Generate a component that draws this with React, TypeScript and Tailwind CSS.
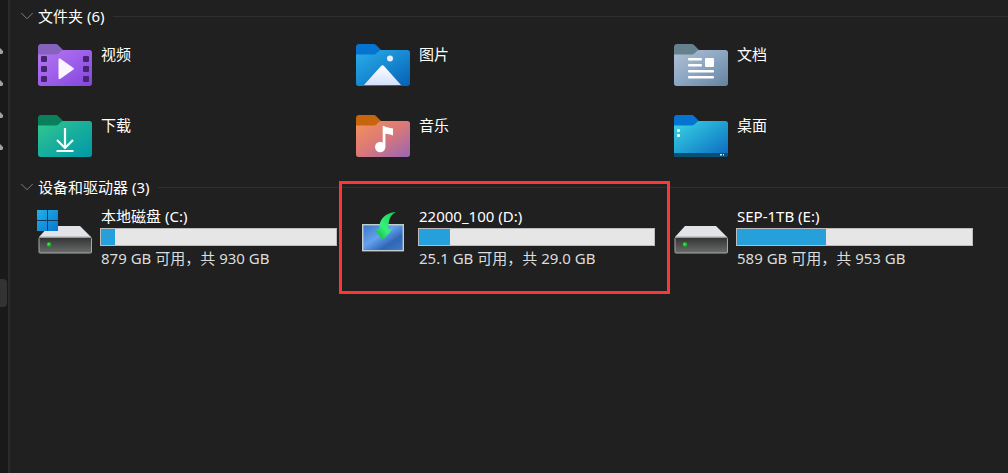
import React from 'react';
import { ChevronDown } from 'lucide-react';

type FolderKind = 'videos' | 'pictures' | 'documents' | 'downloads' | 'music' | 'desktop';

interface Drive {
  label: string;
  free: string;
  total: string;
  used: number;
  icon: 'system' | 'image' | 'disk';
  marked?: boolean;
}

const FOLDERS: { kind: FolderKind; label: string }[] = [
  { kind: 'videos', label: '视频' },
  { kind: 'pictures', label: '图片' },
  { kind: 'documents', label: '文档' },
  { kind: 'downloads', label: '下载' },
  { kind: 'music', label: '音乐' },
  { kind: 'desktop', label: '桌面' },
];

const DRIVES: Drive[] = [
  { label: '本地磁盘 (C:)', free: '879 GB', total: '930 GB', used: 6, icon: 'system' },
  { label: '22000_100 (D:)', free: '25.1 GB', total: '29.0 GB', used: 13, icon: 'image', marked: true },
  { label: 'SEP-1TB (E:)', free: '589 GB', total: '953 GB', used: 38, icon: 'disk' },
];

// back flap, then the three gradient stops of the front
const FOLDER_COLORS: Record<FolderKind, string[]> = {
  videos: ['#8661bd', '#b578ee', '#9d5fea', '#8344dc'],
  pictures: ['#0474d0', '#2aaee8', '#1789d2', '#0560b4'],
  documents: ['#64818d', '#b0c1d6', '#8ca6c2', '#64829f'],
  downloads: ['#0a7f5c', '#34c88d', '#17ae9d', '#0098a8'],
  music: ['#c7650c', '#f5935a', '#d97878', '#9766b5'],
  desktop: ['#0474d0', '#3cd5e5', '#209fd3', '#0b68c0'],
};

const FolderGlyph: React.FC<{ kind: FolderKind }> = ({ kind }) => {
  switch (kind) {
    case 'videos':
      return (
        <>
          {[12, 22, 32].map(y => (
            <g key={y} fill="#452570">
              <rect x="3" y={y} width="6" height="6" rx="1" />
              <rect x="45" y={y} width="6" height="6" rx="1" />
            </g>
          ))}
          <path d="M20.500 15.500c0-1 .8-1.400 1.600-.9l13.400 9.300c.7.5.7 1.200 0 1.700l-13.400 9.300c-.8.5-1.600.1-1.600-.9z" fill="#faf5ff" />
        </>
      );
    case 'pictures':
      return (
        <>
          <circle cx="34" cy="14.500" r="3" fill="#e5f0fa" />
          <path d="M8 41 25 22c1-1 2-1 3 0l17 19z" fill="url(#mountain)" />
        </>
      );
    case 'documents':
      return (
        <g fill="#fff">
          <rect x="14" y="14" width="14" height="2.500" rx="1" />
          <rect x="14" y="20" width="14" height="2.500" rx="1" />
          <rect x="31" y="14" width="9" height="9" rx="1" />
          <rect x="14" y="26" width="26" height="2.500" rx="1" />
          <rect x="14" y="32" width="26" height="2.500" rx="1" />
        </g>
      );
    case 'downloads':
      return (
        <path d="M27 13v19M19 25l8 8 8-8M18.500 36h17" fill="none" stroke="#f4fffc" strokeWidth="2.200" strokeLinejoin="round" />
      );
    case 'music':
      return (
        <g fill="#fff">
          <path d="M26.700 11.500c0-.7.6-1 1.200-.6 2.600 1.800 6 1.300 9.100 2.600v7c-2.500-1.400-5-1.200-7.600-1.800V32h-2.700z" />
          <circle cx="24.200" cy="32" r="5.200" />
        </g>
      );
    case 'desktop':
      return (
        <>
          <path d="M0 38h54v1.500c0 1.500-1 2.500-2.500 2.500h-49C1 42 0 41 0 39.500z" fill="#075078" />
          <rect x="3" y="14" width="3" height="3" rx="1" fill="#e8fcff" />
          <rect x="3" y="19" width="3" height="3" rx="1" fill="#e8fcff" />
          <path d="M46 39h2v1.500h-2zM49 39h1v1.500h-1z" fill="#d7eefa" />
        </>
      );
  }
};

const FolderIcon: React.FC<{ kind: FolderKind }> = ({ kind }) => {
  const [back, from, middle, to] = FOLDER_COLORS[kind];
  return (
    <svg viewBox="0 0 54 42" className="h-[42px] w-[54px] shrink-0" aria-hidden="true">
      <defs>
        <linearGradient id={kind} x1="0" y1="0" x2="1" y2="1">
          <stop offset="0" stopColor={from} />
          <stop offset=".5" stopColor={middle} />
          <stop offset="1" stopColor={to} />
        </linearGradient>
        <linearGradient id="mountain" x1="0" y1="0" x2="0" y2="1">
          <stop offset="0" stopColor="#fff" />
          <stop offset="1" stopColor="#d3e0fb" />
        </linearGradient>
      </defs>
      <path d="M0 3c0-1.700 1.300-3 3-3h14c1.500 0 2.500.4 3.500 1.400L25 6v6H0z" fill={back} />
      <path d="M0 10.500h17c2 0 3-.5 4.500-2l1.200-1.200C23.800 6.300 24.500 6 26 6h25.500C53 6 54 7 54 8.500v31c0 1.500-1 2.500-2.500 2.500h-49C1 42 0 41 0 39.500z" fill={`url(#${kind})`} />
      <FolderGlyph kind={kind} />
    </svg>
  );
};

const DiskIcon: React.FC<{ system?: boolean }> = ({ system }) => (
  <svg viewBox="0 0 56 44" className="h-[44px] w-[56px] shrink-0" aria-hidden="true">
    <defs>
      <linearGradient id="disk-front" x1="0" y1="0" x2="0" y2="1">
        <stop offset="0" stopColor="#303232" />
        <stop offset="1" stopColor="#6b6c6c" />
      </linearGradient>
      <linearGradient id="windows" x1="0" y1="0" x2="1" y2="1">
        <stop offset="0" stopColor="#23b0e9" />
        <stop offset="1" stopColor="#0877cf" />
      </linearGradient>
    </defs>
    <path d="M12 16h31l11 11H2z" fill="#e1e3e8" />
    <path d="M3 27h50.500l1 1.500V42a1 1 0 0 1-1 1H3a1 1 0 0 1-1-1V28.500z" fill="url(#disk-front)" stroke="#a6a8a8" />
    <path d="M3 27h50.500" stroke="#bdc9c3" />
    <circle cx="12" cy="34.500" r="2.200" fill="#12c51e" />
    <circle cx="11.500" cy="34" r=".8" fill="#79ff78" />
    {system && (
      <>
        <path d="M0 0h21v21H0z" fill="#123c5e" />
        <path d="M0 0h10v10H0zM11 0h10v10H11zM0 11h10v10H0zM11 11h10v10H11z" fill="url(#windows)" />
      </>
    )}
  </svg>
);

const InstallIcon = () => (
  <svg viewBox="0 0 56 44" className="h-[44px] w-[56px] shrink-0" aria-hidden="true">
    <defs>
      <linearGradient id="screen" x1="0" y1="0" x2="1" y2="1">
        <stop offset="0" stopColor="#3a74c8" />
        <stop offset=".42" stopColor="#65a2ea" />
        <stop offset=".55" stopColor="#4b87d6" />
        <stop offset=".7" stopColor="#3067b5" />
        <stop offset="1" stopColor="#4379c6" />
      </linearGradient>
      <linearGradient id="arrow" x1="1" y1="0" x2="0" y2="1">
        <stop offset="0" stopColor="#17c950" />
        <stop offset=".55" stopColor="#35f27b" />
        <stop offset="1" stopColor="#07a629" />
      </linearGradient>
    </defs>
    <rect x="7.700" y="14.700" width="40.600" height="26" fill="url(#screen)" stroke="#c2cfcd" strokeWidth="1.400" />
    <path d="M41 2c-6 3-7.500 8-7.700 17H38L28 30l-9-11h5C24.500 9 29.500 3 41 2z" fill="url(#arrow)" />
  </svg>
);

const Section: React.FC<{ title: string; count: number; children: React.ReactNode }> = ({ title, count, children }) => (
  <section>
    <h2>
      <button type="button" aria-expanded="true" className="flex h-6 w-full items-center pl-1.5 text-left">
        <ChevronDown className="h-[22px] w-[22px] text-[#858585]" strokeWidth={1} />
        <span>
          {title} ({count})
        </span>
        <span className="ml-2 h-px flex-1 bg-[#303030]" />
      </button>
    </h2>
    {children}
  </section>
);

const DriveTile: React.FC<{ drive: Drive }> = ({ drive }) => (
  <li className="relative flex gap-[7px]">
    {drive.icon === 'image' ? <InstallIcon /> : <DiskIcon system={drive.icon === 'system'} />}
    <div className="-mt-1.5 w-[237px]">
      <p className="h-6 pl-px leading-6">{drive.label}</p>
      <div className="h-[18px] border border-[#bcbcbc] bg-[#e6e6e6]">
        <div className="h-full bg-[#26a0da]" style={{ width: `${drive.used}%` }} />
      </div>
      <p className="h-6 pl-px leading-6 text-[#dcdcdc]">
        {drive.free} 可用，共 {drive.total}
      </p>
    </div>
    {drive.marked && (
      <span className="pointer-events-none absolute -top-[29px] -left-4 h-[113px] w-[331px] border-3 border-[#fb3737]" />
    )}
  </li>
);

const App = () => (
  <div className="flex min-h-screen overflow-hidden bg-[#202020] font-['Noto_Sans','Noto_Sans_CJK_SC',sans-serif] text-[15px] text-white">
    <aside className="w-[10px] shrink-0 border-r-2 border-[#2b2b2b] bg-[#191919]">
      <div className="flex flex-col gap-[26px] pt-12">
        {[0, 1, 2, 3].map(pin => (
          <svg key={pin} viewBox="0 0 4 6" className="h-[6px] w-1" aria-hidden="true">
            <path d="M0 0 3 3v2L2 6H0z" fill="#9ba3aa" />
          </svg>
        ))}
      </div>
      <div className="mt-[129px] h-7 w-[7px] rounded-r-sm bg-[#333]" />
    </aside>
    <main className="min-w-0 flex-1 pt-1">
      <Section title="文件夹" count={6}>
        <ul className="grid grid-cols-[repeat(auto-fill,318px)] gap-y-[29px] pt-4 pb-[18px] pl-7">
          {FOLDERS.map(folder => (
            <li key={folder.kind} className="flex gap-[9px]">
              <FolderIcon kind={folder.kind} />
              <span className="-mt-0.5 h-6 leading-6">{folder.label}</span>
            </li>
          ))}
        </ul>
      </Section>
      <Section title="设备和驱动器" count={3}>
        <ul className="grid grid-cols-[repeat(auto-fill,318px)] pt-[11px] pl-[27px]">
          {DRIVES.map(drive => (
            <DriveTile key={drive.label} drive={drive} />
          ))}
        </ul>
      </Section>
    </main>
  </div>
);

export default App;
